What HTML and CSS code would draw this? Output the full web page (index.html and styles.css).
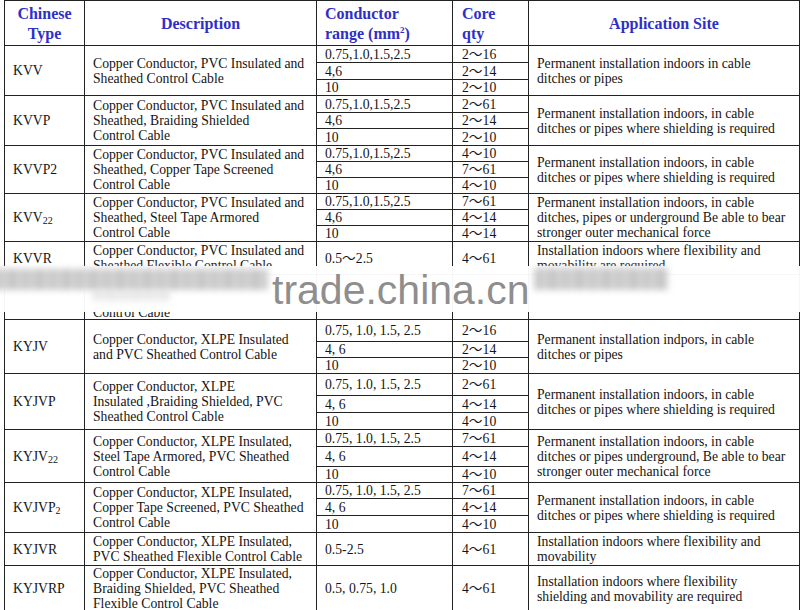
FILE: index.html
```html
<!DOCTYPE html>
<html>
<head>
<meta charset="utf-8">
<link rel="stylesheet" href="styles.css">
</head>
<body>
<div class="page">
<table class="spec">
<colgroup><col class="c1"><col class="c2"><col class="c3"><col class="c4"><col class="c5"></colgroup>
<tr class="head">
  <th class="ctr">Chinese<br>Type</th>
  <th class="ctr">Description</th>
  <th>Conductor<br>range (mm<sup>2</sup>)</th>
  <th class="core">Core<br>qty</th>
  <th class="ctr">Application Site</th>
</tr>

<tr class="h17"><td rowspan="3">KVV</td><td rowspan="3" class="desc">Copper Conductor, PVC Insulated and<br>Sheathed Control Cable</td><td>0.75,1.0,1.5,2.5</td><td class="core">2～16</td><td rowspan="3" class="app">Permanent installation indoors in cable<br>ditches or pipes</td></tr>
<tr class="h17"><td>4,6</td><td class="core">2～14</td></tr>
<tr class="h16"><td>10</td><td class="core">2～10</td></tr>

<tr class="h17"><td rowspan="3">KVVP</td><td rowspan="3" class="desc">Copper Conductor, PVC Insulated and<br>Sheathed, Braiding Shielded<br>Control Cable</td><td>0.75,1.0,1.5,2.5</td><td class="core">2～61</td><td rowspan="3" class="app">Permanent installation indoors, in cable<br>ditches or pipes where shielding is required</td></tr>
<tr class="h16"><td>4,6</td><td class="core">2～14</td></tr>
<tr class="h17"><td>10</td><td class="core">2～10</td></tr>

<tr class="h16"><td rowspan="3">KVVP2</td><td rowspan="3" class="desc">Copper Conductor, PVC Insulated and<br>Sheathed, Copper Tape Screened<br>Control Cable</td><td>0.75,1.0,1.5,2.5</td><td class="core">4～10</td><td rowspan="3" class="app">Permanent installation indoors, in cable<br>ditches or pipes where shielding is required</td></tr>
<tr class="h16"><td>4,6</td><td class="core">7～61</td></tr>
<tr class="h16"><td>10</td><td class="core">4～10</td></tr>

<tr class="h16"><td rowspan="3">KVV<sub>22</sub></td><td rowspan="3" class="desc">Copper Conductor, PVC Insulated and<br>Sheathed, Steel Tape Armored<br>Control Cable</td><td>0.75,1.0,1.5,2.5</td><td class="core">7～61</td><td rowspan="3" class="app">Permanent installation indoors, in cable<br>ditches, pipes or underground Be able to bear<br>stronger outer mechanical force</td></tr>
<tr class="h16"><td>4,6</td><td class="core">4～14</td></tr>
<tr class="h16"><td>10</td><td class="core">4～14</td></tr>

<tr class="h33"><td>KVVR</td><td class="desc">Copper Conductor, PVC Insulated and<br>Sheathed Flexible Control Cable</td><td>0.5～2.5</td><td class="core">4～61</td><td class="app">Installation indoors where flexibility and<br>movability are required</td></tr>
<tr class="h45"><td></td><td class="desc tail">Control Cable</td><td></td><td class="core"></td><td class="app"></td></tr>

<tr class="h22"><td rowspan="3">KYJV</td><td rowspan="3" class="desc">Copper Conductor, XLPE Insulated<br>and PVC Sheathed Control Cable</td><td>0.75, 1.0, 1.5, 2.5</td><td class="core">2～16</td><td rowspan="3" class="app">Permanent installation indpors, in cable<br>ditches or pipes</td></tr>
<tr class="h16"><td>4, 6</td><td class="core">2～14</td></tr>
<tr class="h15"><td>10</td><td class="core">2～10</td></tr>

<tr class="h22"><td rowspan="3">KYJVP</td><td rowspan="3" class="desc">Copper Conductor, XLPE<br>Insulated ,Braiding Shielded, PVC<br>Sheathed Control Cable</td><td>0.75, 1.0, 1.5, 2.5</td><td class="core">2～61</td><td rowspan="3" class="app">Permanent installation indoors, in cable<br>ditches or pipes where shielding is required</td></tr>
<tr class="h17"><td>4, 6</td><td class="core">4～14</td></tr>
<tr class="h17"><td>10</td><td class="core">4～10</td></tr>

<tr class="h17"><td rowspan="3">KYJV<sub>22</sub></td><td rowspan="3" class="desc">Copper Conductor, XLPE Insulated,<br>Steel Tape Armored, PVC Sheathed<br>Control Cable</td><td>0.75, 1.0, 1.5, 2.5</td><td class="core">7～61</td><td rowspan="3" class="app">Permanent installation indoors, in cable<br>ditches or pipes underground, Be able to bear<br>stronger outer mechanical force</td></tr>
<tr class="h20"><td>4, 6</td><td class="core">4～14</td></tr>
<tr class="h16"><td>10</td><td class="core">4～10</td></tr>

<tr class="h16"><td rowspan="3">KVJVP<sub>2</sub></td><td rowspan="3" class="desc">Copper Conductor, XLPE Insulated,<br>Copper Tape Screened, PVC Sheathed<br>Control Cable</td><td>0.75, 1.0, 1.5, 2.5</td><td class="core">7～61</td><td rowspan="3" class="app">Permanent installation indoors, in cable<br>ditches or pipes where shielding is required</td></tr>
<tr class="h17"><td>4, 6</td><td class="core">4～14</td></tr>
<tr class="h17"><td>10</td><td class="core">4～10</td></tr>

<tr class="h33"><td>KYJVR</td><td class="desc">Copper Conductor, XLPE Insulated,<br>PVC Sheathed Flexible Control Cable</td><td>0.5-2.5</td><td class="core">4～61</td><td class="app">Installation indoors where flexibility and<br>movability</td></tr>

<tr class="h46"><td>KYJVRP</td><td class="desc">Copper Conductor, XLPE Insulated,<br>Braiding Shielded, PVC Sheathed<br>Flexible Control Cable</td><td>0.5, 0.75, 1.0</td><td class="core">4～61</td><td class="app">Installation indoors where flexibility<br>shielding and movability are required</td></tr>
</table>

<div class="wm">
  <div class="wm-haze"></div>
  <div class="wm-smudge wm-left"></div>
  <div class="wm-smudge wm-right"></div>
  <div class="wm-smudge wm-low"></div>
  <div class="wm-text">trade.china.cn</div>
</div>
</div>
</body>
</html>
```
FILE: styles.css
```css
html, body {
  margin: 0;
  padding: 0;
  background: #fff;
}
body {
  font-family: "Liberation Serif", "Times New Roman", "Noto Sans CJK SC", serif;
  color: #141414;
}
.page {
  position: relative;
  width: 800px;
  height: 610px;
  overflow: hidden;
  padding-left: 4px;
  box-sizing: border-box;
}
.spec {
  border-collapse: collapse;
  table-layout: fixed;
  width: 795px;
  font-size: 13.7px;
}
.c1 { width: 80px; }
.c2 { width: 232px; }
.c3 { width: 136px; }
.c4 { width: 76px; }
.c5 { width: 271px; }

.spec th, .spec td {
  border: 1px solid #222;
  padding: 0 0 0 8px;
  vertical-align: middle;
  white-space: nowrap;
  line-height: 15px;
  text-align: left;
}
.spec td.core, .spec th.core { padding-left: 9px; }
.spec td.app { padding-left: 8px; }
.spec th {
  font-size: 16px;
  font-weight: bold;
  color: #2f2fc8;
  line-height: 20px;
  padding-top: 2px;
}
.spec th.ctr { text-align: center; padding-left: 0; }
.head { height: 45px; }
.spec sup { font-size: 9px; line-height: 0; vertical-align: 6px; }
.spec sub { font-size: 10px; line-height: 0; vertical-align: -2px; }

.h15 { height: 15px; }
.h16 { height: 16px; }
.h17 { height: 17px; }
.h20 { height: 20px; }
.h22 { height: 22px; }
.h33 { height: 33px; }
.h45 { height: 45px; }
.h46 { height: 46px; }

.spec td.tail { vertical-align: bottom; padding-bottom: 0; line-height: 13px; }

.wm {
  position: absolute;
  left: 0;
  top: 266px;
  width: 800px;
  height: 46px;
}
.wm-haze {
  position: absolute;
  left: 0; top: 0; right: 0; bottom: 0;
  background: rgba(255, 255, 255, 0.96);
}
.wm-smudge {
  position: absolute;
  filter: blur(3px);
  background: repeating-linear-gradient(90deg, #cbcbcb 0 10px, #d6d6d6 10px 14px, #c6c6c6 14px 22px, #d3d3d3 22px 27px);
}
.wm-left { left: -6px; top: 3px; width: 274px; height: 21px; }
.wm-right { left: 534px; top: 2px; width: 134px; height: 22px; }
.wm-low { left: 92px; top: 24px; width: 78px; height: 11px; opacity: 0.4; }
.wm-text {
  position: absolute;
  left: 272px;
  top: 4px;
  font-family: "Liberation Sans", Arial, sans-serif;
  font-size: 41px;
  line-height: 1;
  color: #8e8e8e;
  white-space: nowrap;
}
```
